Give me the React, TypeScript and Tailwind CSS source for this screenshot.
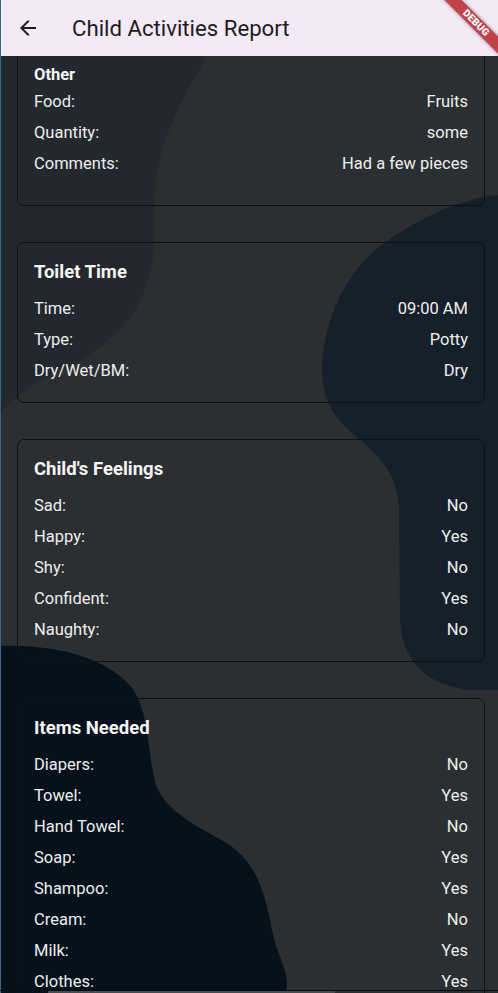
import React from "react";

type Row = [string, string];

function Rows({ rows }: { rows: Row[] }) {
  return (
    <div className="flex flex-col">
      {rows.map(([k, v]) => (
        <div key={k} className="h-[31px] flex items-center justify-between text-[16.5px] leading-[20px] text-[#eeeeee]">
          <span>{k}</span>
          <span>{v}</span>
        </div>
      ))}
    </div>
  );
}

function Card({ title, rows }: { title: string; rows: Row[] }) {
  return (
    <div className="ml-[17px] w-[468px] shrink-0 rounded-[7px] border border-[#0e1012] px-4 pt-[17px] pb-4">
      <div className="text-[18.5px] leading-[24px] font-bold text-[#f5f5f5] mb-[9px]">{title}</div>
      <Rows rows={rows} />
    </div>
  );
}

export default function App() {
  return (
    <div className="relative w-[498px] h-[993px] overflow-hidden bg-[#2c2f32] font-['Roboto',sans-serif]">
      <svg className="absolute inset-0" width="498" height="993" viewBox="0 0 498 993">
        <path
          d="M0,40 L208,40 C206,70 190,82 180,105 C168,130 156,160 155,200 C154,240 156,265 143,295 C128,330 95,355 60,370 C35,382 15,398 0,413 Z"
          fill="#23282e"
        />
        <path
          d="M498,195 C460,198 410,222 375,250 C340,280 322,330 322,370 C322,400 335,420 360,440 C385,460 398,480 399,510 L400,620 C402,660 425,685 470,690 L498,690 Z"
          fill="#16202a"
        />
        <path
          d="M0,646 C60,644 110,660 132,688 C150,712 148,760 156,785 C166,812 200,828 225,842 C252,858 264,885 272,930 C278,960 292,975 285,993 L0,993 Z"
          fill="#05111b"
        />
      </svg>

      <div className="relative z-10 h-[56px] bg-[#f4e9f7] flex items-center overflow-hidden">
        <div className="w-[56px] h-[56px] flex items-center justify-center">
          <svg width="24" height="24" viewBox="0 0 24 24">
            <path d="M20 11H7.83l5.59-5.59L12 4l-8 8 8 8 1.41-1.41L7.83 13H20v-2z" fill="#1d1b20" />
          </svg>
        </div>
        <div className="ml-[16px] text-[22.2px] leading-[28px] text-[#1d1b20]">Child Activities Report</div>
        <div className="absolute left-[416px] top-[17px] w-[120px] h-[12px] rotate-45 bg-[#c2424a] shadow-[0_0_4px_rgba(0,0,0,0.45)] flex items-center justify-center">
          <span className="text-[10px] leading-[10px] font-black text-white tracking-[0.2px]">DEBUG</span>
        </div>
      </div>

      <div className="relative z-0 h-[937px] overflow-hidden flex flex-col gap-[36px]">
        <div className="ml-[17px] w-[468px] shrink-0 rounded-[7px] border border-[#0e1012] px-4 pt-[36px] pb-[26px] -mt-[29px]">
          <div className="text-[16.5px] leading-[22px] font-bold text-[#f5f5f5]">Other</div>
          <Rows
            rows={[
              ["Food:", "Fruits"],
              ["Quantity:", "some"],
              ["Comments:", "Had a few pieces"],
            ]}
          />
        </div>
        <Card
          title="Toilet Time"
          rows={[
            ["Time:", "09:00 AM"],
            ["Type:", "Potty"],
            ["Dry/Wet/BM:", "Dry"],
          ]}
        />
        <Card
          title="Child's Feelings"
          rows={[
            ["Sad:", "No"],
            ["Happy:", "Yes"],
            ["Shy:", "No"],
            ["Confident:", "Yes"],
            ["Naughty:", "No"],
          ]}
        />
        <Card
          title="Items Needed"
          rows={[
            ["Diapers:", "No"],
            ["Towel:", "Yes"],
            ["Hand Towel:", "No"],
            ["Soap:", "Yes"],
            ["Shampoo:", "Yes"],
            ["Cream:", "No"],
            ["Milk:", "Yes"],
            ["Clothes:", "Yes"],
          ]}
        />
      </div>

      <div className="absolute left-0 top-0 bottom-0 w-[1px] bg-[#3a6788] z-20" />
      <div className="absolute left-0 right-0 bottom-[2px] h-[1px] bg-[#0b0c0d] z-20" />
      <div className="absolute left-[48px] w-[287px] bottom-0 h-[2px] bg-[#4a4d50] z-20" />
    </div>
  );
}
